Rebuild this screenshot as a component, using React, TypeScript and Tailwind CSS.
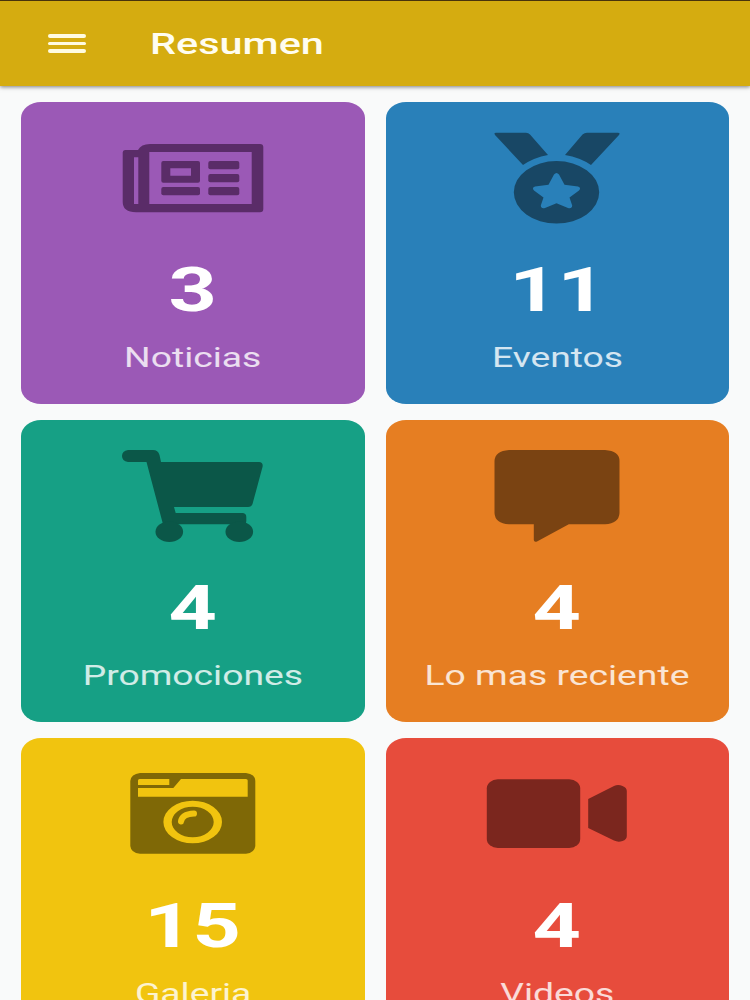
import { ReactNode } from "react";

interface Tile {
  label: string;
  count: number;
  color: string;
  iconColor: string;
  icon: ReactNode;
}

const tiles: Tile[] = [
  {
    label: "Noticias",
    count: 3,
    color: "bg-[#9b59b6]",
    iconColor: "text-[#5a2c68]",
    icon: (
      <>
        <path
          fillRule="evenodd"
          d="M12 22H25Q28 16 37 16H147Q150.300 16 150.300 19V81Q150.300 84.300 147 84.300H23Q9.700 84 9.700 74V24.500Q9.700 22 12 22ZM36.300 24V76H138.700V24ZM21 29.300V76H25.300V29.300Z"
        />
        <path
          fillRule="evenodd"
          d="M50.300 33H85Q87 33 87 35V52.700Q87 54.700 85 54.700H50.300Q48.300 54.700 48.300 52.700V35Q48.300 33 50.300 33ZM57.300 40.300V47.700H78V40.300Z"
        />
        <rect x="48.300" y="59" width="38.700" height="8.300" rx="2" />
        <rect x="95.300" y="33" width="31" height="8.300" rx="2" />
        <rect x="95.300" y="46" width="31" height="8.300" rx="2" />
        <rect x="95.300" y="59" width="31" height="8.300" rx="2" />
      </>
    ),
  },
  {
    label: "Eventos",
    count: 11,
    color: "bg-[#2980b9]",
    iconColor: "text-[#184765]",
    icon: (
      <>
        <path d="M19 4.700H49Q51.500 4.700 53 6.500L71 27Q57 29.500 46 37L18 7Q16.500 4.700 19 4.700Z" />
        <path d="M110 4.700H141Q143.500 4.700 142 7L114 37Q103 29.500 88 27L105.500 6.500Q107.500 4.700 110 4.700Z" />
        <path
          fillRule="evenodd"
          d="M36.800 64.300A42.700 31.300 0 1 1 122.200 64.300A42.700 31.300 0 1 1 36.800 64.300ZM77 46.500L71.500 56.800L58 58.500Q54.500 59.500 57 62.500L66.500 69.500L63.800 77.500Q64 81 68 80L79.500 75.200L91 80Q95 81 95.200 77.500L92.500 69.500L102 62.500Q104.500 59.500 101 58.500L87.500 56.800L82 46.500Q79.500 43.500 77 46.500Z"
        />
      </>
    ),
  },
  {
    label: "Promociones",
    count: 4,
    color: "bg-[#16a085]",
    iconColor: "text-[#0b5748]",
    icon: (
      <>
        <path d="M15 4H40Q45 4 46.500 9L48 16H146Q150.500 16.500 149.500 21L139.500 58Q138.500 61 135 61H61L62.700 67H130Q133.300 67.500 133.300 71V75Q133.300 78.300 130 78.300H50L33.500 16H15Q9 15 9 10T15 4Z" />
        <ellipse cx="56.300" cy="85.700" rx="13.800" ry="10.300" />
        <ellipse cx="126.300" cy="85.700" rx="13.800" ry="10.300" />
      </>
    ),
  },
  {
    label: "Lo mas reciente",
    count: 4,
    color: "bg-[#e67e22]",
    iconColor: "text-[#7a4312]",
    icon: (
      <path d="M32 4H128Q142.500 5 142.500 15V67Q142 77.500 128 78.300H91.800L60 95.500Q57 96.500 56.800 94V78.300H32Q18 77.500 17.500 67V15Q18 5 32 4Z" />
    ),
  },
  {
    label: "Galeria",
    count: 15,
    color: "bg-[#f1c40f]",
    iconColor: "text-[#7f6806]",
    icon: (
      <>
        <path
          fillRule="evenodd"
          d="M27 9H133Q142.300 10 142.300 17V82Q141.500 89 133 89.700H27Q18 89 17.300 82V17Q18 10 27 9ZM26.500 15Q25 15 25 16.500V21H56.300V15ZM25 24V32.700H134.700V16.500Q134.700 15 133 15H68L60.300 24ZM50.400 58A29.300 21.300 0 1 0 109 58A29.300 21.300 0 1 0 50.400 58ZM58.700 58A21 15.300 0 1 1 100.700 58A21 15.300 0 1 1 58.700 58Z"
        />
        <path
          d="M68 57.500Q69 50 81 49.500"
          className="fill-none stroke-[#f1c40f] stroke-6"
          strokeLinecap="round"
        />
      </>
    ),
  },
  {
    label: "Videos",
    count: 4,
    color: "bg-[#e74c3c]",
    iconColor: "text-[#7b261e]",
    icon: (
      <>
        <rect x="9.800" y="15.300" width="93.400" height="68.700" rx="11" ry="9" />
        <path d="M111.200 35L137 22Q141 20 145.500 22Q149.800 23.500 149.800 27V72Q149.800 75.500 145.500 77Q141 78.500 137 76.500L111.200 64Z" />
      </>
    ),
  },
];

function SummaryTile({ tile }: { tile: Tile }) {
  return (
    <div className={`flex h-[302px] flex-col items-center rounded-[20px/16px] pt-[26px] ${tile.color}`}>
      <svg viewBox="0 0 160 100" className={`h-[100px] w-40 shrink-0 fill-current ${tile.iconColor}`}>
        {tile.icon}
      </svg>
      <span className="mt-[31px] scale-x-[1.36] text-[62px] leading-[62px] font-bold text-white">
        {tile.count}
      </span>
      <span className="mt-[21px] scale-x-[1.38] text-[27px] leading-8 whitespace-nowrap text-white/80">
        {tile.label}
      </span>
    </div>
  );
}

export default function App() {
  return (
    <div className="h-[1000px] w-[750px] overflow-hidden bg-[#f9fafa] font-[Roboto,sans-serif]">
      <header className="relative flex h-[86px] items-center border-t border-[#49330b] bg-[#d5ac10] pl-12 shadow-[0_1px_4px_rgba(0,0,0,0.5)]">
        <button aria-label="Menu" className="flex w-[38px] flex-col gap-1">
          <span className="h-[3.500px] rounded-full bg-[#fffbe0]" />
          <span className="h-[3.500px] rounded-full bg-[#fffbe0]" />
          <span className="h-[3.500px] rounded-full bg-[#fffbe0]" />
        </button>
        <h1 className="mt-px ml-[64px] origin-left scale-x-[1.38] text-[30px] leading-8 font-medium text-[#fffdf0]">
          Resumen
        </h1>
      </header>

      <main className="grid grid-cols-2 gap-x-[21px] gap-y-4 px-[21px] pt-4">
        {tiles.map((tile) => (
          <SummaryTile key={tile.label} tile={tile} />
        ))}
      </main>
    </div>
  );
}
